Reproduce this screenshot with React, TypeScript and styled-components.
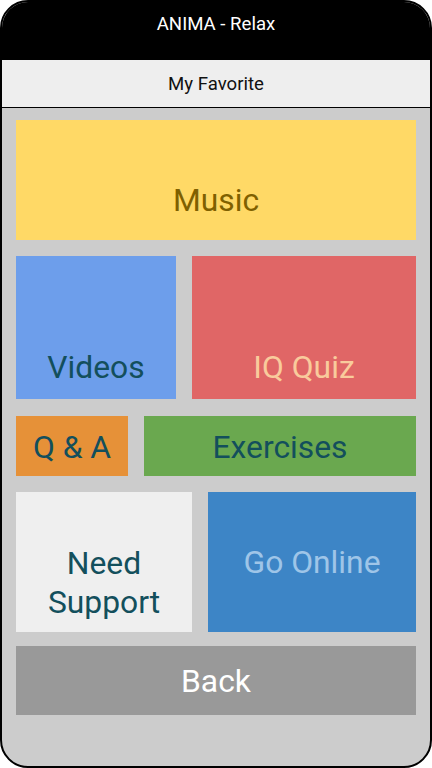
import React from "react";
import styled, { createGlobalStyle } from "styled-components";

const GlobalStyle = createGlobalStyle`
  html, body {
    margin: 0;
    padding: 0;
    background: #ffffff;
  }
  body {
    font-family: Roboto, "Liberation Sans", Arial, sans-serif;
  }
`;

const Phone = styled.div`
  width: 432px;
  height: 768px;
  box-sizing: border-box;
  border: 2px solid #000000;
  border-radius: 28px;
  overflow: hidden;
  display: flex;
  flex-flow: column;
  background: #cccccc;
`;

const TitleBar = styled.header`
  height: 58px;
  box-sizing: border-box;
  padding-top: 10px;
  background: #000000;
  color: #ffffff;
  font-size: 18.6px;
  line-height: 25px;
  text-align: center;
`;

const SubBar = styled.div`
  height: 48px;
  box-sizing: border-box;
  border-bottom: 1px solid #000000;
  background: #eeeeee;
  color: #111111;
  font-size: 18.6px;
  display: flex;
  align-items: center;
  justify-content: center;
`;

const Board = styled.main`
  flex: 1;
  display: flex;
  flex-flow: column;
  padding: 12px 14px 0 14px;
`;

const Row = styled.div<{ $cols: string; $height: number; $gap: number }>`
  display: grid;
  grid-template-columns: ${(p) => p.$cols};
  column-gap: 16px;
  height: ${(p) => p.$height}px;
  margin-bottom: ${(p) => p.$gap}px;
`;

const Tile = styled.button<{ $bg: string; $fg: string; $shift?: number }>`
  border: none;
  margin: 0;
  padding: ${(p) => p.$shift ?? 0}px 0 0 0;
  background: ${(p) => p.$bg};
  color: ${(p) => p.$fg};
  font-family: Roboto, "Liberation Sans", Arial, sans-serif;
  font-size: 31.8px;
  line-height: 39px;
  display: flex;
  align-items: center;
  justify-content: center;
  text-align: center;
  cursor: pointer;
`;

const App = () => (
  <>
    <GlobalStyle />
    <Phone>
      <TitleBar>ANIMA - Relax</TitleBar>
      <SubBar>My Favorite</SubBar>
      <Board>
        <Row $cols="400px" $height={120} $gap={16}>
          <Tile $bg="#ffd966" $fg="#7f6000" $shift={40}>
            Music
          </Tile>
        </Row>
        <Row $cols="160px 224px" $height={143} $gap={17}>
          <Tile $bg="#6d9eeb" $fg="#134f5c" $shift={80}>
            Videos
          </Tile>
          <Tile $bg="#e06666" $fg="#f9cb9c" $shift={80}>
            IQ Quiz
          </Tile>
        </Row>
        <Row $cols="112px 272px" $height={60} $gap={16}>
          <Tile $bg="#e69138" $fg="#134f5c" $shift={2}>
            Q &amp; A
          </Tile>
          <Tile $bg="#6aa84f" $fg="#134f5c" $shift={2}>
            Exercises
          </Tile>
        </Row>
        <Row $cols="176px 208px" $height={140} $gap={14}>
          <Tile $bg="#efefef" $fg="#134f5c" $shift={42}>
            Need
            <br />
            Support
          </Tile>
          <Tile $bg="#3d85c6" $fg="#9fc5e8" $shift={1}>
            Go Online
          </Tile>
        </Row>
        <Row $cols="400px" $height={69} $gap={0}>
          <Tile $bg="#999999" $fg="#ffffff" $shift={2}>
            Back
          </Tile>
        </Row>
      </Board>
    </Phone>
  </>
);

export default App;
